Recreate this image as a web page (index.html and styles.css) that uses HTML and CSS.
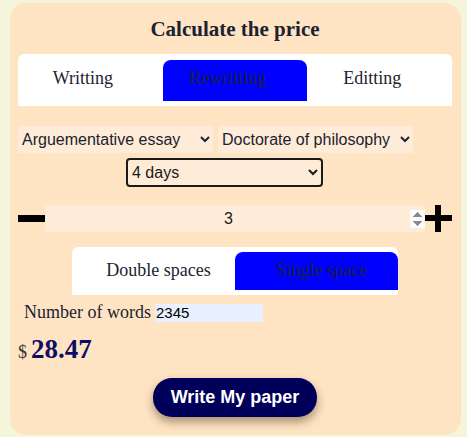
FILE: index.html
```html
<!DOCTYPE html>
<html>
<head>
<meta charset="utf-8">
<link rel="stylesheet" href="styles.css">
</head>
<body>
<div class="card">
  <h2 class="title">Calculate the price</h2>
  <div class="tabs">
    <div class="tab">Writting</div>
    <div class="tab active">Rewritting</div>
    <div class="tab">Editting</div>
  </div>
  <div class="selects">
    <select class="sel"><option>Arguementative essay</option></select>
    <select class="sel"><option>Doctorate of philosophy</option></select>
  </div>
  <div class="days-row">
    <select class="days"><option>4 days</option></select>
  </div>
  <div class="pages">
    <span class="minus"></span>
    <input class="count" type="number" value="3">
    <span class="plus"></span>
  </div>
  <div class="spacing">
    <div class="sp">Double spaces</div>
    <div class="sp active">Single space</div>
  </div>
  <div class="words">
    <span class="words-label">Number of words</span>
    <input class="words-input" type="text" value="2345">
  </div>
  <div class="price"><span class="cur">$</span> <span class="amount">28.47</span></div>
  <div class="actions">
    <button class="order">Write My paper</button>
  </div>
</div>
</body>
</html>
```
FILE: styles.css
```css
html, body {
  margin: 0;
  padding: 0;
  background: #f5f5dc;
}
body {
  padding-top: 3px;
}
.card {
  margin: 0 6px 0 10px;
  height: 432px;
  box-sizing: border-box;
  background: #ffe4c4;
  border-radius: 16px;
  padding: 15px 9px 0 8px;
  font-family: "Liberation Serif", serif;
  color: #1b2230;
}
.title {
  margin: 0;
  font-size: 21px;
  line-height: 23px;
  font-weight: bold;
  text-align: center;
}
.tabs {
  margin-top: 13px;
  background: #fff;
  border-radius: 6px 6px 0 0;
  padding: 6px 0 5px;
  display: grid;
  grid-template-columns: 1fr 1fr 1fr;
}
.tab {
  height: 41px;
  display: flex;
  align-items: center;
  justify-content: center;
  padding: 0 15px 4px 0;
  box-sizing: border-box;
  font-size: 18px;
}
.tab.active, .sp.active {
  background: #0000ff;
  border-radius: 8px 8px 0 0;
}
.selects {
  margin-top: 20px;
  display: flex;
  gap: 5px;
}
.sel, .days {
  font-family: "Liberation Sans", Arial, sans-serif;
  font-size: 16px;
  color: #1b2230;
  background: #ffecd8;
  border: none;
  height: 27px;
  width: 195px;
  padding: 0;
  margin: 0;
}
.days-row {
  margin-top: 5px;
  padding-left: 108px;
}
.days {
  width: 197px;
  height: 29px;
  border: 2px solid #1a1a1a;
  border-radius: 4px;
  color: #1a1a1a;
}
.pages {
  margin-top: 18px;
  display: flex;
  align-items: center;
  height: 27px;
}
.minus {
  width: 27px;
  height: 7px;
  background: #000;
  flex: none;
}
.count {
  flex: 1;
  min-width: 0;
  height: 27px;
  box-sizing: border-box;
  border: none;
  margin: 0;
  padding: 0 0 0 2px;
  background: #ffecd8;
  text-align: center;
  font-family: "Liberation Sans", Arial, sans-serif;
  font-size: 16px;
  color: #1a1a1a;
}
.count::-webkit-inner-spin-button {
  opacity: 1;
}
.plus {
  width: 27px;
  height: 27px;
  flex: none;
  position: relative;
}
.plus::before, .plus::after {
  content: "";
  position: absolute;
  background: #000;
}
.plus::before {
  left: 0;
  right: 0;
  top: 10px;
  height: 6px;
}
.plus::after {
  top: 0;
  bottom: 0;
  left: 10px;
  width: 6px;
}
.spacing {
  margin: 15px auto 0;
  width: 326px;
  background: #fff;
  border-radius: 6px 6px 0 0;
  padding: 5px 0;
  display: grid;
  grid-template-columns: 1fr 1fr;
}
.sp {
  height: 38px;
  display: flex;
  align-items: center;
  justify-content: center;
  padding: 0 0 2px 10px;
  box-sizing: border-box;
  font-size: 18px;
}
.words {
  margin-top: 8px;
  display: flex;
  align-items: baseline;
  padding-left: 6px;
  height: 18px;
}
.words-label {
  font-size: 18px;
  line-height: 18px;
  margin-right: 4px;
}
.words-input {
  width: 108px;
  height: 18px;
  box-sizing: border-box;
  border: none;
  padding: 0 1px;
  margin: 0;
  background: #e8f0fe;
  font-family: "Liberation Sans", Arial, sans-serif;
  font-size: 15px;
  color: #000;
}
.price {
  margin-top: 12px;
  line-height: 32px;
  height: 32px;
}
.cur {
  font-size: 18px;
  color: #333;
}
.amount {
  font-size: 27px;
  font-weight: bold;
  color: #0d0d66;
}
.actions {
  margin-top: 13px;
  display: flex;
  justify-content: center;
}
.order {
  width: 164px;
  height: 39px;
  border: none;
  border-radius: 19px;
  background: #00005a;
  color: #fff;
  font-family: "Liberation Sans", Arial, sans-serif;
  font-weight: bold;
  font-size: 18px;
  box-shadow: 0 5px 10px rgba(60, 40, 10, 0.45);
  padding: 0;
}
```
